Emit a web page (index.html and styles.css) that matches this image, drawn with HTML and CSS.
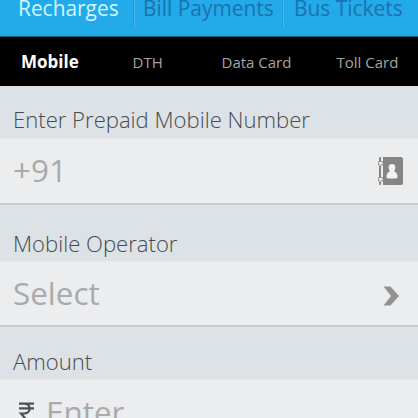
FILE: index.html
```html
<!DOCTYPE html>
<html lang="en">
<head>
<meta charset="utf-8">
<title>Recharges</title>
<link rel="stylesheet" href="styles.css">
</head>
<body>
<nav class="tabs">
  <span class="tab active">Recharges</span>
  <span class="tab bills">Bill Payments</span>
  <span class="tab bus">Bus Tickets</span>
</nav>
<nav class="subtabs">
  <span class="sub active">Mobile</span>
  <span class="sub dth">DTH</span>
  <span class="sub data">Data Card</span>
  <span class="sub toll">Toll Card</span>
</nav>
<main>
  <div class="label number-label">Enter Prepaid Mobile Number</div>
  <div class="field number">
    <span class="value">+91</span>
    <svg class="contact" width="27" height="30" viewBox="0 0 27 30">
      <path fill="#858585" d="M6 1H24Q26 1 26 3V27Q26 29 24 29H6Z"/>
      <path fill="#858585" d="M2 2Q2 1 3 1H4V5H2ZM2 10H4V21H2ZM2 26H4V29H3Q2 29 2 27Z"/>
      <path fill="#ecedef" stroke="#858585" stroke-width=".8" d="M1.500 5.500H6V9H1.500ZM1.500 21.500H6V25H1.500Z"/>
      <path fill="#f1f2f3" d="M15 8C12.700 8 11.500 9.500 11.700 11.500C11.700 13.500 12.600 14.500 12.800 15.500C10.500 16.500 9.500 18 9.500 20.500Q9.500 22.500 11 22.500H19Q20.500 22.500 20.500 20.500C20.500 18 19.500 16.500 17.200 15.500C17.400 14.500 18.300 13.500 18.300 11.500C18.500 9.500 17.300 8 15 8Z"/>
    </svg>
  </div>
  <div class="label operator-label">Mobile Operator</div>
  <div class="field operator">
    <span class="value">Select</span>
    <svg class="chevron" width="17" height="20" viewBox="0 0 17 20"><path fill="#929292" d="M.5.5H7.500L16 10L7.500 19.500H.5L8 10Z"/></svg>
  </div>
  <div class="label amount-label">Amount</div>
  <div class="field amount">
    <svg class="rupee" width="17" height="24" viewBox="0 0 17 24"><path fill="none" stroke="#4d5052" stroke-width="2.200" d="M1 1.600H16M1 6.300H16M2 1.600H6C13.500 1.600 13.500 11.500 6 11.500H3L13 23"/></svg>
    <span class="value">Enter</span>
  </div>
</main>
</body>
</html>
```
FILE: styles.css
```css
* { box-sizing: border-box; }
body {
  margin: 0;
  width: 418px;
  height: 418px;
  overflow: hidden;
  background: #dde2e6;
  font-family: "Open Sans", "Noto Sans", sans-serif;
  white-space: nowrap;
}
main { height: 332px; overflow: hidden; }
.tabs {
  display: grid;
  grid-template-columns: 134px 149px 135px;
  height: 37px;
  background: #22aaea;
  border-bottom: 1px solid #126083;
  overflow: hidden;
}
.tab {
  height: 35px;
  margin-top: -7px;
  padding-left: 18px;
  font-size: 20.9px;
  line-height: 30px;
  color: #1c73ad;
}
.tab.active { color: #d3f7ff; }
.tab + .tab { border-left: 1px solid #48b8ec; box-shadow: -1px 0 #209bd5; }
.tab.bills { padding-left: 8px; }
.tab.bus { padding-left: 10px; }
.subtabs {
  display: grid;
  grid-template-columns: 132.5px 89px 115px 81.5px;
  height: 49px;
  background: #000;
  color: #a4a4a4;
  font-size: 15px;
  line-height: 50px;
}
.sub.active { padding-left: 21px; color: #fff; font-size: 17px; font-weight: 700; }
.label {
  padding-left: 13px;
  height: 52px;
  padding-top: 18px;
  font-size: 22.1px;
  font-weight: 300;
  line-height: 30px;
  color: #484b4e;
}
.operator-label { height: 56px; padding-top: 23px; }
.amount-label { padding-top: 19px; }
.field {
  display: flex;
  align-items: center;
  height: 67px;
  padding: 0 14px 0 13px;
  background: #ecedef;
  border-top: 1px solid #e6e9eb;
  border-bottom: 2px solid #c6cbcf;
}
.operator { height: 66px; }
.value { flex: 1; color: #a9aaab; font-size: 31.4px; line-height: 64px; }
.number .value { margin-top: -2px; }
.operator .value { margin-top: -2px; }
.chevron { margin-right: 4px; margin-top: 4px; }
.rupee { margin: 4px 11px 0 5px; }
```
